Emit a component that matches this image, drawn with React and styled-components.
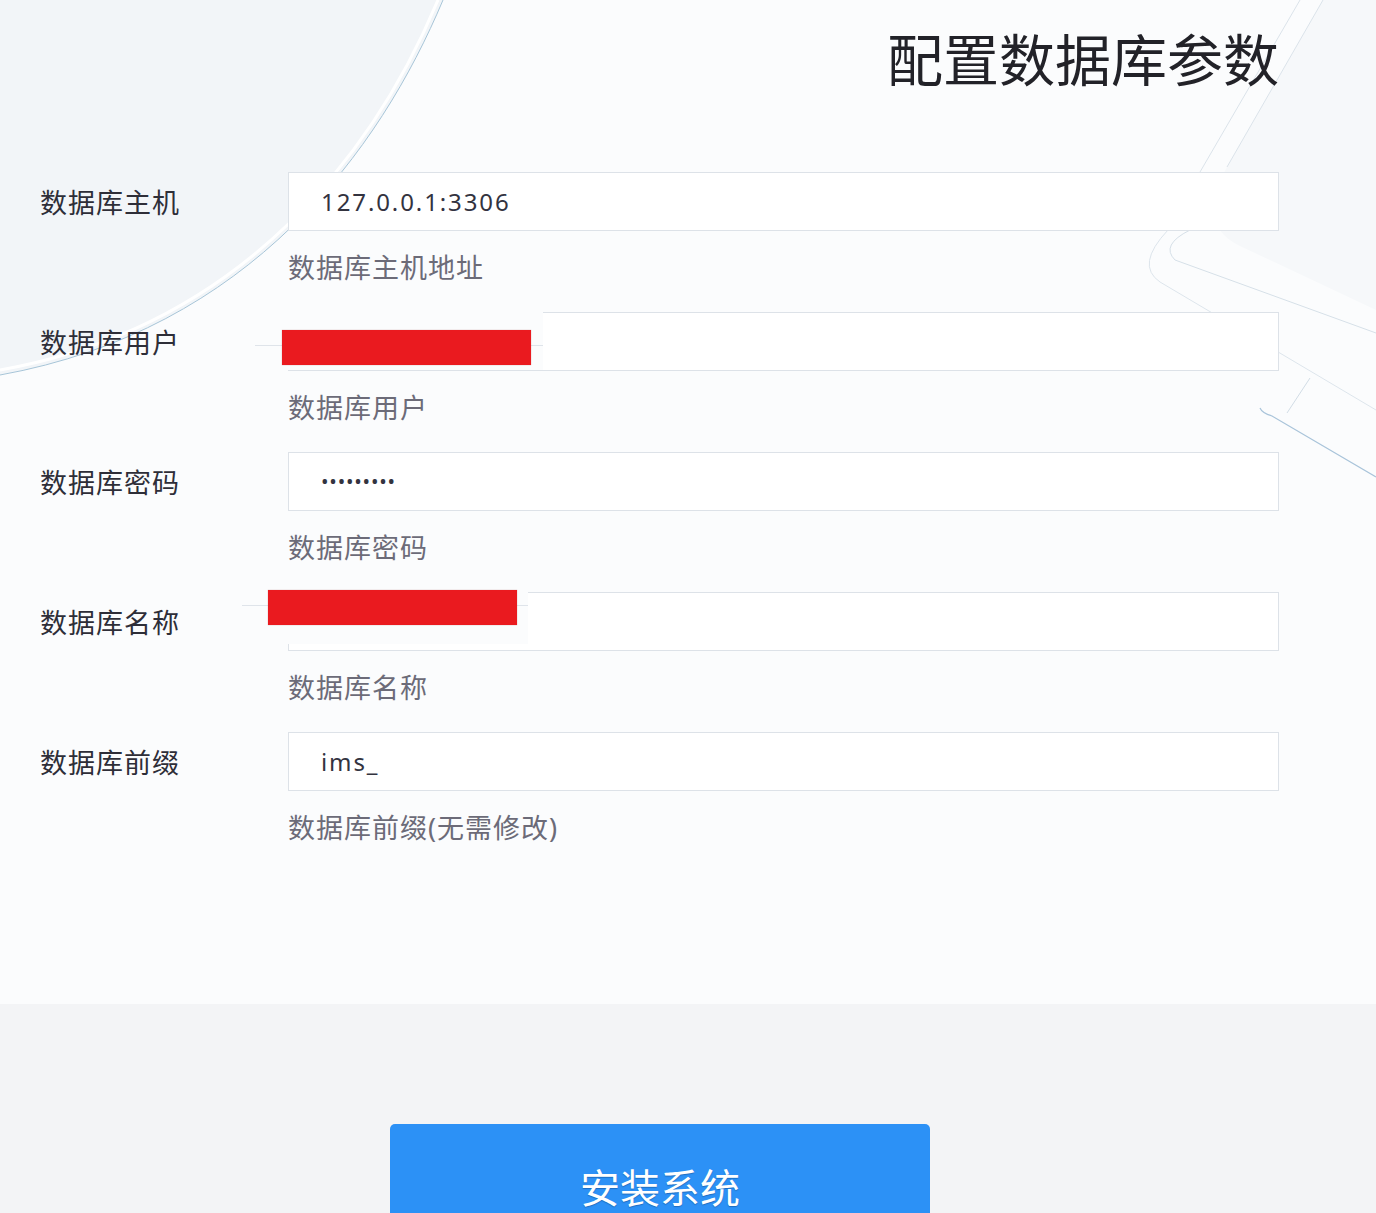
import React from 'react'
import styled, { createGlobalStyle } from 'styled-components'

const GlobalStyle = createGlobalStyle`
  html, body {
    margin: 0;
    padding: 0;
    overflow: hidden;
    background: #f3f4f6;
  }
  * { box-sizing: border-box; }
`

const fields = [
    { label: '数据库主机', value: '127.0.0.1:3306', help: '数据库主机地址' },
    { label: '数据库用户', value: '', help: '数据库用户', mask: { left: 242, top: 18, patchLeft: 215, patchTop: -6, patchW: 288, patchH: 64, lineTop: 39 } },
    { label: '数据库密码', value: '•••••••••', help: '数据库密码', secret: true },
    { label: '数据库名称', value: '', help: '数据库名称', mask: { left: 228, top: -2, patchLeft: 202, patchTop: -6, patchW: 286, patchH: 58, lineTop: 19 } },
    { label: '数据库前缀', value: 'ims_', help: '数据库前缀(无需修改)' },
]

export default function App() {
    return (
        <Page>
            <GlobalStyle />
            <Setup>
                <Backdrop viewBox="0 0 1376 1004" preserveAspectRatio="none">
                    <path d="M443,0 C380,150 250,330 0,375 L0,0 Z" fill="#f2f5f8" />
                    <path d="M438,0 C376,148 247,326 0,370" fill="none" stroke="#ffffff" strokeWidth="3" />
                    <path d="M443,0 C380,150 250,330 0,375" fill="none" stroke="#a7c5d8" strokeWidth="1" />

                    <path d="M1323,0 L1227,167 Q1195,225 1240,246 L1376,310 L1376,0 Z" fill="#f6f8fa" />
                    <line x1="1300" y1="0" x2="1200" y2="172" stroke="#dbe3ea" strokeWidth="1" />
                    <line x1="1323" y1="0" x2="1227" y2="167" stroke="#dbe3ea" strokeWidth="1" />
                    <path d="M1190,230 Q1160,245 1175,260 L1376,333" fill="none" stroke="#d6e0e8" strokeWidth="1" />
                    <path d="M1168,230 Q1135,265 1160,282 L1376,410" fill="none" stroke="#dde5ec" strokeWidth="1" />
                    <line x1="1310" y1="378" x2="1287" y2="413" stroke="#d2dde6" strokeWidth="1" />
                    <path d="M1260,408 Q1262,413 1272,416 L1376,477" fill="none" stroke="#a9c4da" strokeWidth="1.2" />
                </Backdrop>

                <Content>
                    <Title>配置数据库参数</Title>
                    <Form>
                        {fields.map((f) => (
                            <Row key={f.label}>
                                <Label>{f.label}</Label>
                                <Field readOnly value={f.value} $secret={f.secret} />
                                <Help>{f.help}</Help>
                                {f.mask && (
                                    <>
                                        <Patch
                                            style={{
                                                left: f.mask.patchLeft,
                                                top: f.mask.patchTop,
                                                width: f.mask.patchW,
                                                height: f.mask.patchH,
                                            }}
                                        >
                                            <PatchLine style={{ top: f.mask.lineTop }} />
                                        </Patch>
                                        <Redaction style={{ left: f.mask.left, top: f.mask.top }} />
                                    </>
                                )}
                            </Row>
                        ))}
                    </Form>
                </Content>
            </Setup>

            <Footer>
                <InstallButton>
                    <span>安装系统</span>
                </InstallButton>
            </Footer>
        </Page>
    )
}

const Page = styled.div`
  height: 100vh;
  overflow: hidden;
  display: flex;
  flex-direction: column;
  font-family: "Noto Sans", "Noto Sans CJK SC", sans-serif;
`

const Setup = styled.section`
  position: relative;
  height: 1004px;
  flex: none;
  background: #fbfcfd;
  overflow: hidden;
`

const Backdrop = styled.svg`
  position: absolute;
  left: 0;
  top: 0;
  width: 100%;
  height: 100%;
  pointer-events: none;
`

const Content = styled.div`
  position: relative;
  padding: 26px 97px 0 40px;
`

const Title = styled.h1`
  margin: 0;
  text-align: right;
  font-size: 56px;
  line-height: 67px;
  font-weight: 400;
  color: #222228;
  letter-spacing: 0;
`

const Form = styled.div`
  padding-top: 79px;
`

const Row = styled.div`
  position: relative;
  display: grid;
  grid-template-columns: 248px 1fr;
  align-items: center;
  margin-bottom: 26px;
`

const Label = styled.div`
  font-size: 27px;
  letter-spacing: 1px;
  color: #2e2e38;
`

const Field = styled.input`
  height: 59px;
  width: 100%;
  border: 1px solid #dde2e8;
  background: #fff;
  padding: 0 0 0 32px;
  outline: none;
  font-family: "Noto Sans", "Noto Sans CJK SC", sans-serif;
  font-size: ${(p) => (p.$secret ? '20px' : '24px')};
  letter-spacing: ${(p) => (p.$secret ? '0.8px' : '1.9px')};
  color: #33333f;
`

const Help = styled.div`
  grid-column: 2;
  margin-top: 19px;
  font-size: 27px;
  line-height: 36px;
  letter-spacing: 1px;
  color: #6c6b78;
`

const Patch = styled.div`
  position: absolute;
  background: #fbfcfd;
`

const PatchLine = styled.div`
  position: absolute;
  left: 0;
  right: 0;
  height: 1px;
  background: #dfe4ea;
`

const Redaction = styled.div`
  position: absolute;
  width: 249px;
  height: 35px;
  background: #ea1a1f;
  box-shadow: 0 0 1px rgba(120, 0, 0, 0.4);
`

const Footer = styled.footer`
  flex: 1;
  background: #f3f4f6;
  padding: 120px 0 0 390px;
`

const InstallButton = styled.button`
  display: flex;
  align-items: flex-start;
  justify-content: center;
  width: 540px;
  height: 89px;
  border: none;
  border-radius: 5px 5px 0 0;
  padding: 0;
  background: #2c91f6;
  color: #fff;
  font-family: "Noto Sans CJK SC", sans-serif;
  font-size: 40px;
  line-height: 44px;
  text-shadow: 0 1px 1px rgba(0, 40, 90, 0.35);
  cursor: pointer;

  span {
    display: block;
    margin-top: 40px;
  }
`
